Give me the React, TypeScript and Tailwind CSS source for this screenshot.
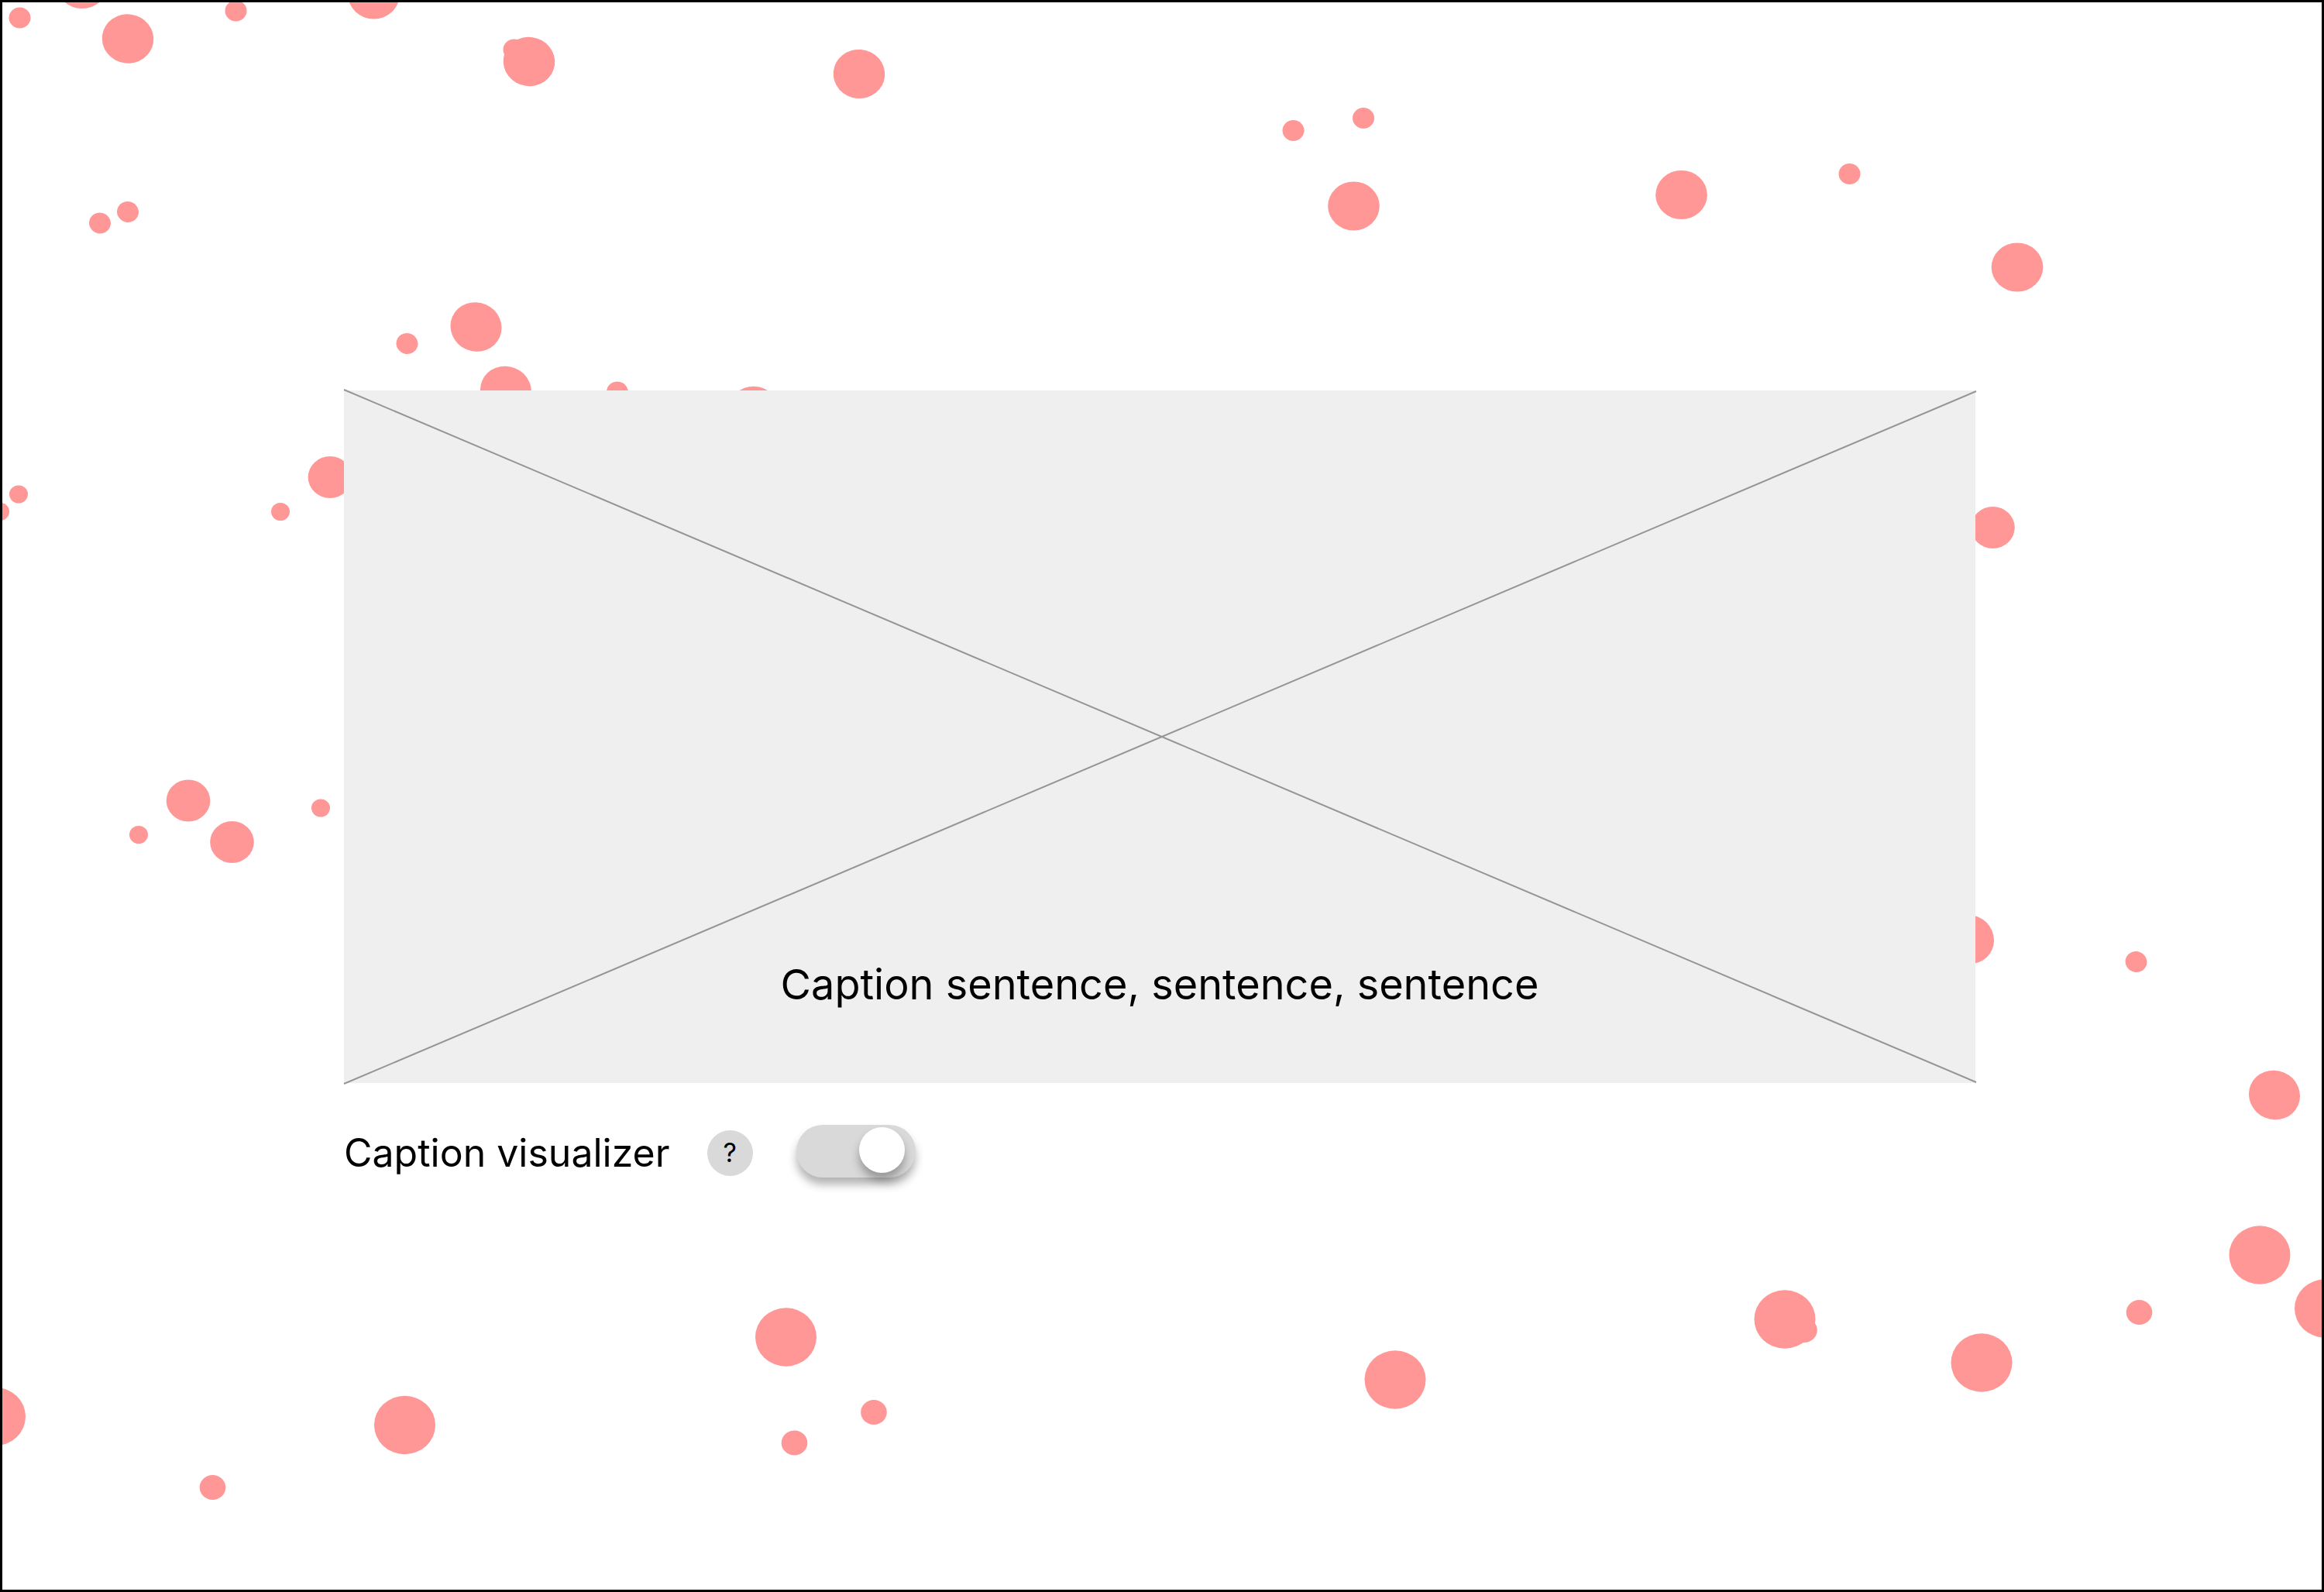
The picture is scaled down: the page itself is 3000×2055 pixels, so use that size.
import { useState } from "react";

type Dot = { x: number; y: number; tilt?: number };

const tinyDots: Dot[] = [
  { x: 24, y: 638 },
  { x: 0, y: 660.5 },
  { x: 362, y: 660.5 },
  { x: 179, y: 1077.5 },
  { x: 414, y: 1043 },
];

const smallDots: Dot[] = [
  { x: 25.5, y: 23 },
  { x: 304.5, y: 14 },
  { x: 663.5, y: 64 },
  { x: 129, y: 288, tilt: 15 },
  { x: 165, y: 273.5, tilt: 15 },
  { x: 525.5, y: 443.5, tilt: 15 },
  { x: 797, y: 506, tilt: 15 },
  { x: 1669.5, y: 168.5 },
  { x: 1760, y: 152.5 },
  { x: 2387.5, y: 224.5 },
  { x: 2757.5, y: 1241.5, tilt: 23 },
];

const mediumDots: Dot[] = [
  { x: 426, y: 616 },
  { x: 243, y: 1033.5 },
  { x: 299.5, y: 1087 },
  { x: 2572.5, y: 681 },
];

const largeDots: Dot[] = [
  { x: 106, y: -20.5 },
  { x: 165, y: 50, tilt: 8 },
  { x: 482.5, y: -7 },
  { x: 683, y: 79.5, tilt: 8 },
  { x: 614.5, y: 422, tilt: 23 },
  { x: 653, y: 504.5, tilt: 23 },
  { x: 974, y: 530.5, tilt: 23 },
  { x: 1109, y: 95.5, tilt: 5 },
  { x: 1747.5, y: 266 },
  { x: 2170.5, y: 251.5 },
  { x: 2604, y: 345 },
  { x: 2541, y: 1212.5, tilt: 23 },
  { x: 2936, y: 1413.5, tilt: 23 },
];

const mistDots: Dot[] = [
  { x: 274.5, y: 1920 },
  { x: 1128, y: 1823 },
  { x: 1025.5, y: 1862.5 },
  { x: 2329, y: 1717 },
  { x: 2761.5, y: 1694 },
];

const hugeDots: Dot[] = [
  { x: -6.5, y: 1828.5 },
  { x: 522.5, y: 1839.5 },
  { x: 1014.5, y: 1726 },
  { x: 1801, y: 1781 },
  { x: 2304, y: 1703 },
  { x: 2558, y: 1759 },
  { x: 2917, y: 1620 },
  { x: 3001.5, y: 1689 },
];

const groups: { dots: Dot[]; rx: number; ry: number }[] = [
  { dots: tinyDots, rx: 12, ry: 11.5 },
  { dots: smallDots, rx: 14, ry: 13.4 },
  { dots: mediumDots, rx: 28.3, ry: 27 },
  { dots: largeDots, rx: 33.3, ry: 31.6 },
  { dots: mistDots, rx: 16.8, ry: 16 },
  { dots: hugeDots, rx: 39.5, ry: 37.7 },
];

function DotField() {
  return (
    <svg
      className="pointer-events-none absolute inset-0 h-full w-full"
      viewBox="3 3 2994 2049"
      preserveAspectRatio="xMidYMid slice"
      aria-hidden="true"
    >
      {groups.map((group, g) => (
        <g key={g} fill="#ff9797">
          {group.dots.map((d) => (
            <ellipse
              key={`${d.x}-${d.y}`}
              cx={d.x}
              cy={d.y}
              rx={group.rx}
              ry={group.ry}
              transform={`rotate(${d.tilt ?? 0} ${d.x} ${d.y})`}
            />
          ))}
        </g>
      ))}
    </svg>
  );
}

function VideoPlaceholder() {
  return (
    <figure className="relative flex aspect-[2106/894] w-full flex-col items-center justify-end bg-[#efefef] pb-[94px]">
      <svg
        className="absolute inset-0 h-full w-full overflow-visible"
        viewBox="0 0 2106 894"
        preserveAspectRatio="none"
        aria-hidden="true"
      >
        <path d="M0 -1L2107 893M0 895L2107 1" stroke="#959595" strokeWidth="2" fill="none" />
      </svg>
      <figcaption className="relative text-[54px] leading-[66px]">
        Caption sentence, sentence, sentence
      </figcaption>
    </figure>
  );
}

export default function App() {
  const [enabled, setEnabled] = useState(true);

  return (
    <main className="relative min-h-screen overflow-hidden border-[3px] border-black bg-white pt-[501px] pr-[447px] pl-[441px] font-['Inter',sans-serif] text-black">
      <DotField />
      <VideoPlaceholder />
      <div className="relative mt-[54px] flex items-start gap-[56px]">
        <div className="flex items-center gap-12 pt-[2px]">
          <label htmlFor="caption-visualizer" className="text-[50px] leading-[68px]">
            Caption visualizer
          </label>
          <button
            type="button"
            aria-label="About the caption visualizer"
            className="flex size-[59px] items-center justify-center rounded-full bg-[#d9d9d9] text-[34px] leading-[42px]"
          >
            ?
          </button>
        </div>
        <span className="relative h-[68px] w-[154px]">
          <input
            id="caption-visualizer"
            type="checkbox"
            role="switch"
            checked={enabled}
            onChange={(e) => setEnabled(e.target.checked)}
            className="peer block h-full w-full cursor-pointer appearance-none rounded-full bg-[#d9d9d9] shadow-[0_9px_12px_rgba(0,0,0,0.3)]"
          />
          <span className="pointer-events-none absolute top-[3px] left-[13px] size-[59px] rounded-full bg-white shadow-[0_9px_12px_rgba(0,0,0,0.3)] peer-checked:left-[81px]" />
        </span>
      </div>
    </main>
  );
}
